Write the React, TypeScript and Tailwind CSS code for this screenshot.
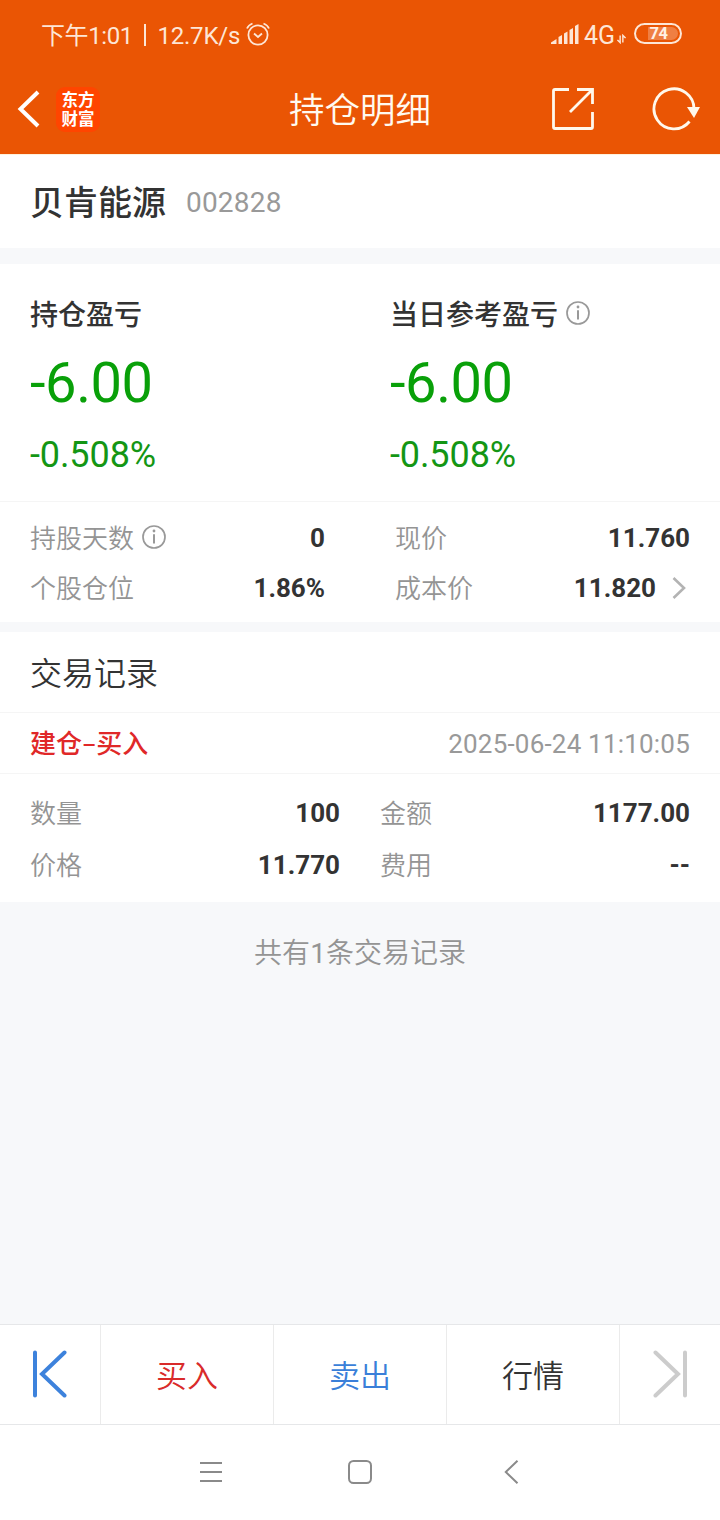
interface FieldProps {
	label: string;
	value: string;
	info?: boolean;
	arrow?: boolean;
}

interface ProfitProps {
	title: string;
	amount: string;
	percent: string;
	info?: boolean;
}

const InfoIcon = () => (
	<svg width="24" height="24" viewBox="0 0 24 24" fill="none" stroke="#999" strokeWidth="1.7">
		<circle cx="12" cy="12" r="11" />
		<path d="M12 9.2V18.5" strokeWidth="2" />
		<circle cx="12" cy="6" r="1.4" fill="#999" stroke="none" />
	</svg>
);

const Profit = (props: ProfitProps) => (
	<div className="w-[360px] pl-[30px]">
		<div className="flex h-[38px] items-center gap-2 text-[28px] font-medium text-[#333]">
			<h2 className="pt-[5px]">{props.title}</h2>
			{props.info && <InfoIcon />}
		</div>
		<p className="mt-[15px] h-[72px] text-[56px] leading-[72px] tracking-[-0.4px] text-[#09a009]">{props.amount}</p>
		<p className="mt-3 h-12 text-[36px] leading-[48px] tracking-[-0.1px] text-[#149614]">{props.percent}</p>
	</div>
);

const Field = (props: FieldProps) => (
	<div className="flex items-center text-[26px]">
		<span className="pt-[2px] font-[350] text-[#949494]">{props.label}</span>
		{props.info && (
			<span className="mb-[2px] ml-2">
				<InfoIcon />
			</span>
		)}
		<span className="ml-auto font-bold text-[#333]">{props.value}</span>
		{props.arrow && (
			<svg className="mr-[4px] mb-px ml-4" width="14" height="24" viewBox="0 0 14 24" fill="none" stroke="#b3b3b3" strokeWidth="2.6">
				<path d="M1.5 2L12 12L1.5 22" />
			</svg>
		)}
	</div>
);

const StatusBar = () => (
	<div className="flex h-[70px] items-center pr-[38px] pl-[41px] text-[#fde6d6]">
		<span className="pt-[2px] text-[24px] tracking-[-0.4px] whitespace-nowrap">下午1:01</span>
		<span className="mx-[11.5px] h-[22px] w-[1.5px] bg-[#fde6d6]" />
		<span className="pt-px text-[24px] tracking-[-0.2px]">12.7K/s</span>
		<svg className="mb-[2px] ml-[6px]" width="24" height="24" viewBox="0 0 24 24" fill="none" stroke="currentColor" strokeWidth="1.8">
			<circle cx="12" cy="13" r="9.6" />
			<path d="M1 6.5Q2.5 3 6.5 1.5M23 6.5Q21.5 3 17.5 1.5" />
			<path d="M8 11.5L12 15L16 11.5" />
		</svg>
		<svg className="mb-[2px] ml-auto" width="28" height="20" viewBox="0 0 28 20" fill="currentColor">
			<path d="M0 20V18.5L5.5 15V20ZM7.5 20V13L11 11V20ZM13 20V9.5L16.5 7.5V20ZM18.5 20V6L22 4V20ZM24 20V2L27.5 0V20Z" />
		</svg>
		<span className="ml-[5px] pt-px text-[25px]">4G</span>
		<svg className="mt-[7px] mr-[2px] ml-[2px]" width="9" height="10" viewBox="0 0 10 10" fill="none" stroke="currentColor" strokeWidth="1.6">
			<path d="M3.5 1V9L0.5 6M6.5 9V1L9.5 4" />
		</svg>
		<div className="mb-[3px] ml-[6px] flex h-[21px] w-12 items-center justify-center rounded-full border-2 border-current p-[2px]">
			<div className="ml-[9px] h-[13px] w-[30px] rounded-r-full bg-white/25">
				<span className="block w-[22px] text-center text-[16.5px] leading-[14px] font-bold tracking-[-0.5px] text-[#fff1e6]">74</span>
			</div>
		</div>
	</div>
);

const Header = () => (
	<header className="h-[155px] border-b border-[#fff2dc] bg-[#ea5504]">
		<StatusBar />
		<div className="flex h-[78px] items-center">
			<div className="flex w-[240px] items-center">
				<svg className="ml-[17px]" width="24" height="38" viewBox="0 0 24 38" fill="none" stroke="#fff" strokeWidth="4">
					<path d="M21 2L3.5 19L21 36" />
				</svg>
				<div className="ml-[15px] flex h-[45px] w-11 flex-col items-center justify-center rounded-[9px] bg-[#ff4500] pt-px text-[16.5px] leading-[19px] font-bold text-white">
					<span>东方</span>
					<span>财富</span>
				</div>
			</div>
			<h1 className="w-[240px] pt-[6px] text-center text-[35.5px] font-[350] text-[#fffaf0]">持仓明细</h1>
			<svg className="ml-[71px]" width="44" height="44" viewBox="0 0 44 44" fill="none" stroke="#fff8ec" strokeWidth="2.8">
				<path d="M18 2.5H4Q2.5 2.5 2.5 4V40Q2.5 41.5 4 41.5H40Q41.5 41.5 41.5 40V25" />
				<path d="M26 2.5H41.5V17M41 3L19 25" />
			</svg>
			<svg className="ml-[57px]" width="50" height="44" viewBox="0 0 50 44" fill="none" stroke="#fff8ec" strokeWidth="2.8">
				<path d="M37.5 34.5A20 20 0 1 1 42 22" />
				<path d="M35 20H48L42 31Z" fill="#fff8ec" stroke="none" />
			</svg>
		</div>
	</header>
);

const ActionBar = () => (
	<nav className="flex h-[101px] border-y border-[#e6e7e9] bg-white text-[31px] font-[350]">
		<button className="flex w-[101px] items-center justify-center border-r border-[#ebebeb] pb-[2px]">
			<svg width="36" height="48" viewBox="0 0 36 48" fill="none" stroke="#3d82dc" strokeWidth="4" strokeLinecap="round">
				<path d="M3 2.5V45.5M32.5 2.5L10 24L32.5 45.5" />
			</svg>
		</button>
		<button className="w-[173px] border-r border-[#ebebeb] pt-[5px] text-[#d92b2b]">买入</button>
		<button className="w-[173px] border-r border-[#ebebeb] pt-[5px] text-[#3a7fd9]">卖出</button>
		<button className="w-[173px] border-r border-[#ebebeb] pt-[5px] text-[#333]">行情</button>
		<button className="flex w-[100px] items-center justify-center pb-[2px]">
			<svg width="36" height="48" viewBox="0 0 36 48" fill="none" stroke="#ccc" strokeWidth="4" strokeLinecap="round">
				<path d="M33 2.5V45.5M3.5 2.5L26 24L3.5 45.5" />
			</svg>
		</button>
	</nav>
);

const SystemNav = () => (
	<div className="flex h-[95px] items-center bg-white pb-[2px]">
		<svg className="ml-[200px]" width="22" height="22" viewBox="0 0 22 22" stroke="#8a8a8a" strokeWidth="2">
			<path d="M0 2H22M0 11H22M0 20H22" />
		</svg>
		<svg className="ml-[125px]" width="26" height="26" viewBox="0 0 26 26" fill="none" stroke="#8a8a8a" strokeWidth="2">
			<rect x="2" y="2" width="22" height="22" rx="4.5" />
		</svg>
		<svg className="ml-[131px]" width="16" height="24" viewBox="0 0 16 24" fill="none" stroke="#8a8a8a" strokeWidth="2">
			<path d="M13.5 0.8L1.8 12L13.5 23.2" />
		</svg>
	</div>
);

export default function App() {
	return (
		<div className="flex h-[1520px] w-[720px] flex-col overflow-hidden bg-[#f7f8fa] font-[Roboto,'Noto_Sans_CJK_SC',sans-serif]">
			<Header />

			<section className="flex h-[93px] items-center bg-white pl-[30px]">
				<h2 className="pt-[4px] text-[34px] font-medium text-[#333]">贝肯能源</h2>
				<span className="ml-5 pt-[3px] text-[28px] tracking-[0.2px] text-[#999]">002828</span>
			</section>

			<section className="mt-4 h-[358px] bg-white">
				<div className="flex h-[238px] border-b border-[#f5f5f5] pt-[30px]">
					<Profit title="持仓盈亏" amount="-6.00" percent="-0.508%" />
					<Profit title="当日参考盈亏" amount="-6.00" percent="-0.508%" info />
				</div>
				<div className="grid auto-rows-[50px] grid-cols-[295px_295px] gap-x-[70px] pt-[11px] pl-[30px]">
					<Field label="持股天数" value="0" info />
					<Field label="现价" value="11.760" />
					<Field label="个股仓位" value="1.86%" />
					<Field label="成本价" value="11.820" arrow />
				</div>
			</section>

			<section className="mt-[10px] h-[270px] bg-white">
				<h2 className="h-[81px] border-b border-[#f5f5f5] pt-[2px] pl-[30px] text-[32px] leading-[80px] font-[350] text-[#333]">交易记录</h2>
				<div className="flex h-[61px] items-center justify-between border-b border-[#f5f5f5] px-[30px] text-[26px]">
					<span className="pt-[3px] font-medium text-[#e02828]">
						建仓<span className="text-[22px]">–</span>买入
					</span>
					<span className="pt-[2px] tracking-[0.2px] text-[#999]">2025-06-24 11:10:05</span>
				</div>
				<div className="grid auto-rows-[52px] grid-cols-[310px_310px] gap-x-10 pt-[13px] pl-[30px]">
					<Field label="数量" value="100" />
					<Field label="金额" value="1177.00" />
					<Field label="价格" value="11.770" />
					<Field label="费用" value="--" />
				</div>
			</section>

			<p className="mt-8 text-center text-[28px] leading-10 font-[350] text-[#949494]">
				共有<span className="font-normal">1</span>条交易记录
			</p>

			<div className="mt-auto">
				<ActionBar />
				<SystemNav />
			</div>
		</div>
	);
}
